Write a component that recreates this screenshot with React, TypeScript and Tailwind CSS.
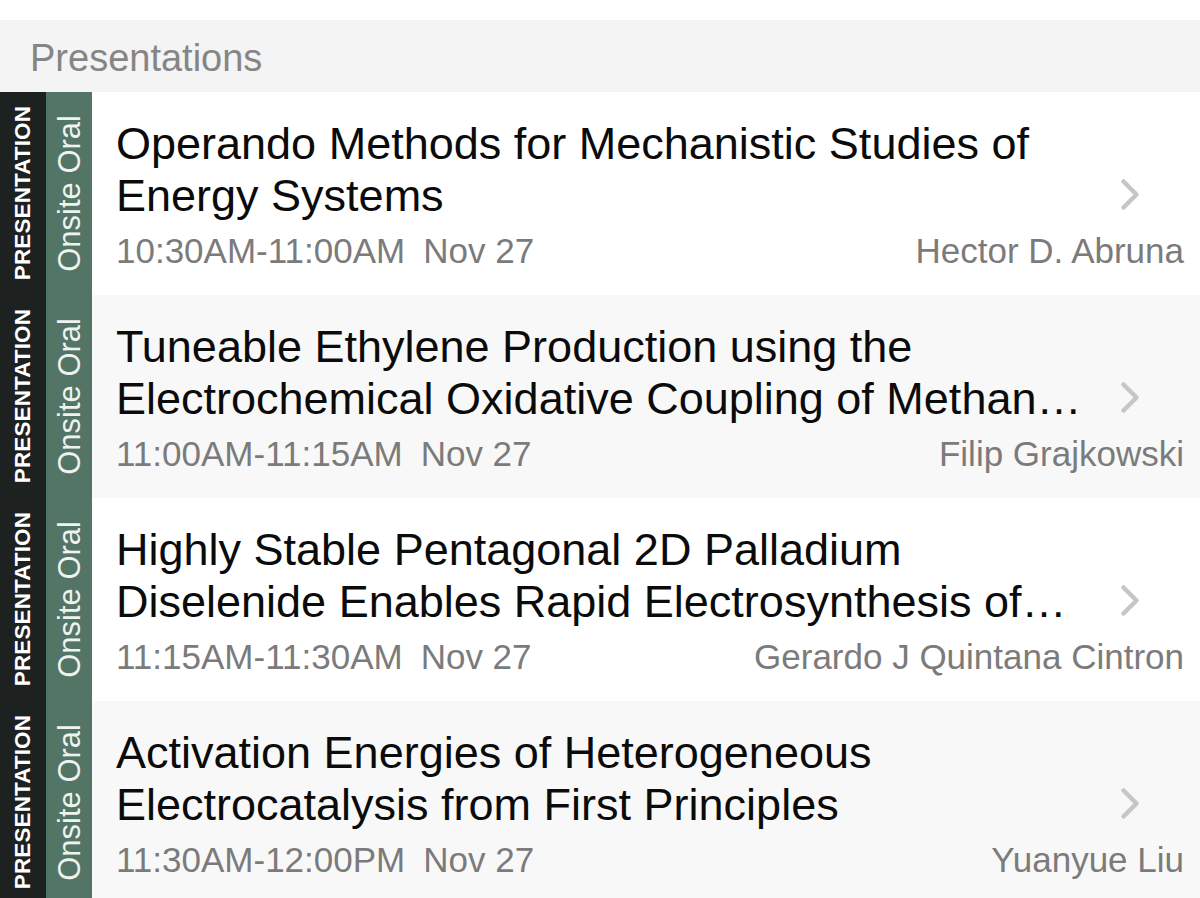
import React from 'react';

interface Presentation {
  lines: string[];
  time: string;
  date: string;
  speaker: string;
}

const presentations: Presentation[] = [
  {
    lines: ['Operando Methods for Mechanistic Studies of', 'Energy Systems'],
    time: '10:30AM-11:00AM',
    date: 'Nov 27',
    speaker: 'Hector D. Abruna',
  },
  {
    lines: ['Tuneable Ethylene Production using the', 'Electrochemical Oxidative Coupling of Methan…'],
    time: '11:00AM-11:15AM',
    date: 'Nov 27',
    speaker: 'Filip Grajkowski',
  },
  {
    lines: ['Highly Stable Pentagonal 2D Palladium', 'Diselenide Enables Rapid Electrosynthesis of…'],
    time: '11:15AM-11:30AM',
    date: 'Nov 27',
    speaker: 'Gerardo J Quintana Cintron',
  },
  {
    lines: ['Activation Energies of Heterogeneous', 'Electrocatalysis from First Principles'],
    time: '11:30AM-12:00PM',
    date: 'Nov 27',
    speaker: 'Yuanyue Liu',
  },
];

const Chevron = () => (
  <svg width="20" height="33" viewBox="0 0 20 33" fill="none">
    <polyline
      points="3.5,3.5 16.5,16.5 3.5,29.5"
      stroke="#c6c6c8"
      strokeWidth="4.5"
      strokeLinecap="round"
      strokeLinejoin="round"
    />
  </svg>
);

const PresentationRow: React.FC<{ item: Presentation; shaded: boolean }> = ({ item, shaded }) => (
  <div className={`flex h-[203px] ${shaded ? 'bg-[#f8f8f8]' : 'bg-white'}`}>
    {/* session type strips */}
    <div className="w-[46px] shrink-0 bg-[#1d2120] flex items-center justify-center">
      <span className="[writing-mode:vertical-rl] rotate-180 text-white font-bold text-[22.5px] leading-none tracking-[0.1px]">
        PRESENTATION
      </span>
    </div>
    <div className="w-[46px] shrink-0 bg-[#527565] flex items-center justify-center">
      <span className="[writing-mode:vertical-rl] rotate-180 text-[#eef3ef] text-[31px] leading-none">
        Onsite Oral
      </span>
    </div>

    <div className="flex-1 min-w-0 pl-[24px] pr-[16px] pt-[26px] grid grid-cols-[1fr_auto] grid-rows-[auto_auto] content-start">
      <div className="col-start-1 row-start-1 min-w-0 text-[45px] leading-[52px] text-[#0b0b0b]">
        {item.lines.map((line, i) => (
          <div key={i} className="whitespace-nowrap overflow-hidden">
            {line}
          </div>
        ))}
      </div>
      <div className="col-start-2 row-start-1 row-span-2 self-center ml-[20px] mr-[44px] flex">
        <Chevron />
      </div>
      <div className="col-start-1 col-span-2 row-start-2 mt-[9px] flex justify-between items-baseline text-[35px] leading-[40px] text-[#7b7b7b]">
        <div className="whitespace-nowrap">
          <span>{item.time}</span>
          <span className="ml-[18px]">{item.date}</span>
        </div>
        <div className="whitespace-nowrap">{item.speaker}</div>
      </div>
    </div>
  </div>
);

export default function App() {
  return (
    <div className="bg-white pt-[20px] font-['Liberation_Sans',Arial,sans-serif]">
      <div className="h-[72px] bg-[#f4f4f4] pl-[30px] pt-[19px] text-[38px] leading-[38px] text-[#858585]">
        Presentations
      </div>
      {presentations.map((p, i) => (
        <PresentationRow key={i} item={p} shaded={i % 2 === 1} />
      ))}
    </div>
  );
}
